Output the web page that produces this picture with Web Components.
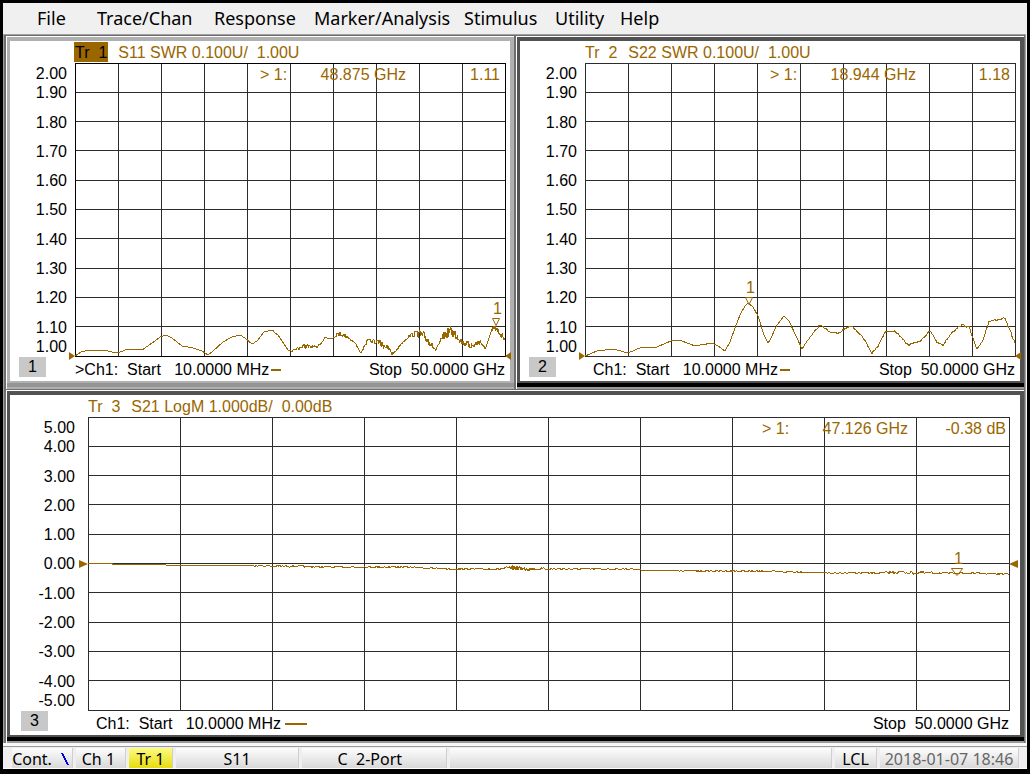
<!DOCTYPE html>
<html lang="en">
<head>
<meta charset="utf-8">
<title>Network Analyzer</title>
<style>
  html { height: 100%; }
  body { margin: 0; min-height: 100%; display: flex; background: #000; }
  analyzer-app { flex: 1; min-width: 0; }
</style>
</head>
<body>
<analyzer-app></analyzer-app>
<script>
const define = (name, html, setup) => {
  const template = document.createElement('template');
  template.innerHTML = html;
  customElements.define(name, class extends HTMLElement {
    constructor() {
      super();
      this.attachShadow({ mode: 'open' }).append(template.content.cloneNode(true));
    }
    connectedCallback() { if (setup) setup(this, this.shadowRoot); }
  });
};

/* Trace points: x, y and an optional noise height, in the units of each plot's view box. */
const traces = {
  s11: '75,356 81,352 90,350 103,350 112,352 120,352 128,349 142,350 152,343 160,337 166,335 172,338 182,346 193,348 202,351 208,355 213,351 223,342 232,337 240,335 245,338 252,344 257,341 264,332 272,330,1 278,335 288,350 292,351,1 303,346,3 317,347,1 325,338,2 332,338,2 338,333,3 348,337,2 355,343,1 361,353,1 364,347,1 368,340,2 380,343,4 387,347,3 393,354,2 402,343,1 408,337,2 417,333,4 425,337,7 430,342,5 436,351,2 442,338,4 450,331,7 457,335,6 462,342,3 473,346,5 480,341,3 485,349,1 490,336,3 494,327,4 498,332,4 505,338,4',
  s22: '585,356 597,351 613,349 628,353 642,347 657,347 673,340 682,341 695,346 712,343 718,346 725,351 730,342 735,328 740,315 745,306 748,303 753,307 758,316 764,335 768,343 770,340 777,325 784,316 789,321 797,338 802,349 810,337,1 820,325,1 830,332,1 838,334,1 845,328,1 852,326,1 863,337,1 872,353,1 878,346,1 885,332,1 895,331,1 908,345,1 920,341,1 930,331,1 937,342,1 943,345,1 952,332,1 962,325,1 969,327,1 977,350,1 983,340,1 989,321,1 1005,319,2 1015,343,1',
  s21: '88,563.5 112,563.5 113,564.5 165,564.5 166,565 219,565 272,566,1 330,567,1 400,567,1 456,569,1 500,569,1 511,568,3 530,569,2 640,569 641,570 700,571,1 735,571,1 800,572,1 830,573 880,573,1 897,572,2 917,573,2 957,573,1 1009,574,1'
};

const trace = source => {
  const knots = source.split(' ').map(p => p.split(',').map(Number));
  const out = [];
  let seed = 7;
  for (let i = 0; i < knots.length - 1; i++) {
    const [x0, y0, n0 = 0] = knots[i], [x1, y1, n1 = 0] = knots[i + 1];
    const step = n0 > 2 ? 0.5 : 1;
    for (let x = x0; x < x1; x += step) {
      seed = (seed * 16807) % 2147483647;
      const t = (x - x0) / (x1 - x0);
      const noise = (seed / 2147483647 - 0.5) * (n0 + (n1 - n0) * t) * 1.6;
      out.push(`${x},${(y0 + (y1 - y0) * t + noise).toFixed(1)}`);
    }
  }
  const last = knots[knots.length - 1];
  out.push(`${last[0]},${last[1]}`);
  return out.join(' ');
};

define('menu-item', `
<style>
  :host { display: block; }
  button { all: unset; font: 18px/24px "Noto Sans", sans-serif; white-space: nowrap; cursor: default; }
</style>
<button type="button"><slot></slot></button>`);

define('menu-bar', `
<style>
  :host { display: block; background: #f0f0f0; }
  nav { display: grid; grid-template-columns: 60px 117px 100px 150px 91px 65px auto; padding: 3px 0 4px 34px; }
</style>
<nav>
  <menu-item>File</menu-item><menu-item>Trace/Chan</menu-item><menu-item>Response</menu-item>
  <menu-item>Marker/Analysis</menu-item><menu-item>Stimulus</menu-item><menu-item>Utility</menu-item>
  <menu-item>Help</menu-item>
</nav>`);

define('value-axis', `
<style>
  :host { display: flex; flex-direction: column; text-align: right; }
  span { flex: 2 0 0; min-height: 0; display: flex; align-items: center; justify-content: flex-end; line-height: 20px; }
  span:first-of-type { flex-grow: 1; align-items: flex-start; }
  span:last-of-type { flex-grow: 1; align-items: flex-end; }
</style>`, (host, root) => {
  const top = Number(host.getAttribute('top')), step = Number(host.getAttribute('step'));
  for (let i = 0; i <= 10; i++) {
    const label = document.createElement('span');
    label.textContent = (top - i * step).toFixed(2);
    root.append(label);
  }
});

define('trace-plot', `
<style>
  :host { display: grid; position: relative; min-width: 0; min-height: 0; color: #996600; }
  .lines { position: absolute; inset: 0; width: 100%; height: 100%; overflow: visible; shape-rendering: crispEdges; }
  .lines * { fill: none; stroke-width: 1; vector-effect: non-scaling-stroke; }
  .grid { stroke: #2c2c2c; }
  .frame { stroke: var(--frame-line, #2c2c2c); }
  .trace { stroke: #996600; }
  .readout { position: relative; display: grid; grid-template-columns: 28px 118px var(--value-width, 94px);
    justify-content: end; align-self: start; padding: 2px var(--value-inset, 5px) 0 0; line-height: 20px; text-align: right; white-space: pre; }
  .flag { text-align: left; }
  .marker { position: absolute; transform: translate(-50%, -100%); display: grid; justify-items: center; line-height: 16px; }
  .marker span { padding-left: 3px; }
  .marker svg { display: block; width: var(--pointer, 8px); height: 9px; }
  .ref { position: absolute; width: var(--arrow, 6px); height: 8px; transform: translateY(-50%); }
  .ref.left { right: 100%; }
  .ref.right { left: 100%; }
</style>
<svg class="lines" preserveAspectRatio="none"><path class="grid"/><path class="frame"/><polyline class="trace"/></svg>
<div class="readout"><span class="flag">&gt; 1:</span><span class="freq"></span><span class="value"></span></div>
<svg class="ref left" viewBox="0 0 6 8" preserveAspectRatio="none"><path d="M0 0L6 4L0 8Z" fill="#996600"/></svg>
<svg class="ref right" viewBox="0 0 6 8" preserveAspectRatio="none"><path d="M6 0L0 4L6 8Z" fill="#996600"/></svg>
<div class="marker"><span>1</span><svg viewBox="0 0 8 9" preserveAspectRatio="none"><path d="M.5 1.5H7.5L4 8.5Z" fill="none" stroke="#996600" vector-effect="non-scaling-stroke"/></svg></div>`, (host, root) => {
  const [x, y, w, h] = host.getAttribute('view').split(' ').map(Number);
  const $ = s => root.querySelector(s);
  $('.lines').setAttribute('viewBox', `${x} ${y} ${w} ${h}`);
  let d = '';
  for (let i = 1; i < 10; i++) d += `M${x + w * i / 10} ${y}v${h}M${x} ${y + h * i / 10}h${w}`;
  $('.grid').setAttribute('d', d);
  $('.frame').setAttribute('d', `M${x} ${y}h${w}v${h}h${-w}z`);
  $('.trace').setAttribute('points', trace(traces[host.getAttribute('source')]));
  $('.freq').textContent = host.getAttribute('freq');
  $('.value').textContent = host.getAttribute('value');
  const [mx, my] = host.getAttribute('marker').split(' ').map(Number);
  $('.marker').style.left = (mx - x) / w * 100 + '%';
  $('.marker').style.top = (my - y) / h * 100 + '%';
  root.querySelectorAll('.ref').forEach(a => a.style.top = host.getAttribute('level'));
});

define('trace-window', `
<style>
  :host { display: flex; min-width: 0; min-height: 0; border: solid #fff; border-width: 1px 0 0 1px;
    background: #000; font: 16px/20px "Liberation Sans", Arial, sans-serif; --rim: #525252; }
  :host([active]) { --rim: #b0b0b0; --frame-line: #000; }
  .shade { flex: 1; display: flex; min-width: 0; padding-bottom: 4px; border-bottom: 2px solid #999; }
  :host([active]) .shade { background: #949494; border-color: #b0b0b0; }
  .pane { flex: 1; min-width: 0; display: grid; background: #fff; border: solid var(--rim); border-width: 4px 4px 2px 3px;
    grid-template: 22px 1fr 25px / var(--gutter, 65px) 1fr var(--edge, 5px); }
  header { grid-column: 2 / 4; display: flex; gap: 11px; color: #996600; white-space: pre; line-height: 22px; }
  header b { font-weight: normal; margin-top: 1px; height: 20px; line-height: 20px; }
  header .title { padding-top: 1px; }
  header b { padding-top: 1px; box-sizing: border-box; }
  :host([active]) header { gap: 10px; }
  :host([active]) header b { background: #996600; color: #000; margin-left: -1px; padding-left: 1px; padding-right: 1px; }
  value-axis { grid-column: 1; padding: 1px var(--axis-gap, 8px) 0 0; margin-bottom: -1px; }
  .badge { grid-column: 1; justify-self: start; margin: 1px 0 0 var(--badge-inset, 9px); width: 27px; height: 20px; background: #c8c8c8; text-align: center; }
  footer { grid-column: 2; display: flex; justify-content: space-between; padding: 4px 0 0 var(--start-inset, 8px); white-space: pre; }
  :host([active]) footer { padding-left: 0; }
  .start { display: flex; align-items: center; align-self: start; gap: var(--dash-gap, 2px); }
  .start::after { content: ""; width: var(--dash, 10px); height: 2px; background: #996600; }
</style>
<div class="shade"><section class="pane">
  <header><b></b><span class="title"></span></header>
  <slot></slot>
  <span class="badge"></span>
  <footer><span class="start"></span><span>Stop  50.0000 GHz</span></footer>
</section></div>`, (host, root) => {
  const n = host.getAttribute('number');
  const $ = s => root.querySelector(s);
  $('b').textContent = `Tr  ${n}`;
  $('.title').textContent = host.getAttribute('label');
  $('.badge').textContent = n;
  $('.start').textContent = (host.hasAttribute('active') ? '>' : '') + 'Ch1:  Start   10.0000 MHz';
  const axis = document.createElement('value-axis');
  axis.setAttribute('top', host.getAttribute('top'));
  axis.setAttribute('step', host.getAttribute('step'));
  $('slot').before(axis);
});

define('status-cell', `
<style>
  :host { display: flex; align-items: center; justify-content: center; white-space: pre; line-height: 18px; padding-top: 2px; min-width: 0;
    background: linear-gradient(#fdfdfd, #d9d9d9); border-right: 1px solid #cfcfcf; box-sizing: border-box; }
  :host([lit]) { background: linear-gradient(#fdfb82, #e6dc10); }
  :host([dim]) { color: #666; }
</style>
<slot></slot>`);

define('status-bar', `
<style>
  :host { display: grid; grid-template-columns: 61px 50px 44px 123px 145px 1fr 42px 139px; gap: 3px;
    padding: 1px 8px 0 9px; min-height: 20px; background: #f0eeee; border-bottom: 1px solid #fff; font: 16px/18px "Noto Sans", sans-serif; }
  svg { width: 8px; height: 12px; margin: 0 3px 0 9px; }
</style>
<status-cell>Cont.<svg viewBox="0 0 8 12"><path d="M1 0L7 12" stroke="#0000e0" stroke-width="2" shape-rendering="crispEdges"/></svg></status-cell>
<status-cell>Ch 1 </status-cell>
<status-cell lit>Tr 1</status-cell>
<status-cell>S11</status-cell>
<status-cell>C  2-Port  </status-cell>
<status-cell></status-cell>
<status-cell>LCL</status-cell>
<status-cell dim>2018-01-07 18:46</status-cell>`);

define('analyzer-app', `
<style>
  :host { display: flex; flex-direction: column; border: solid #000; border-width: 3px 3px 5px; background: #f8f8f8; box-sizing: border-box; }
  main { flex: 1; display: grid; grid-template: 1fr 1fr / 1fr 1fr; gap: 1px 2px; padding: 1px 1px 0 2px;
    background: #6e6e6e; border: solid #a0a0a0; border-width: 1px 1px 0 1px; margin-right: 1px; min-height: 560px; }
  .wide { grid-column: 1 / 3; --gutter: 78px; --edge: 11px; --axis-gap: 13px; --badge-inset: 11px; --dash: 22px; --dash-gap: 4px;
    --value-width: 98px; --value-inset: 3px; --arrow: 9px; --pointer: 13px; }
  status-bar { border-top: 1px solid #999; margin-top: 3px; }
</style>
<menu-bar></menu-bar>
<main>
  <trace-window active number="1" label="S11 SWR 0.100U/  1.00U" top="2" step="0.1">
    <trace-plot view="75 63 430 293" source="s11" freq="48.875 GHz" value="1.11" marker="496 326" level="100%"></trace-plot>
  </trace-window>
  <trace-window number="2" label="S22 SWR 0.100U/  1.00U" top="2" step="0.1">
    <trace-plot view="585 63 430 293" source="s22" freq="18.944 GHz" value="1.18" marker="749 305" level="100%"></trace-plot>
  </trace-window>
  <trace-window class="wide" number="3" label="S21 LogM 1.000dB/  0.00dB" top="5" step="1">
    <trace-plot view="88 417 921 293" source="s21" freq="47.126 GHz" value="-0.38 dB" marker="957 576" level="50%"></trace-plot>
  </trace-window>
</main>
<status-bar></status-bar>`);
</script>
</body>
</html>
